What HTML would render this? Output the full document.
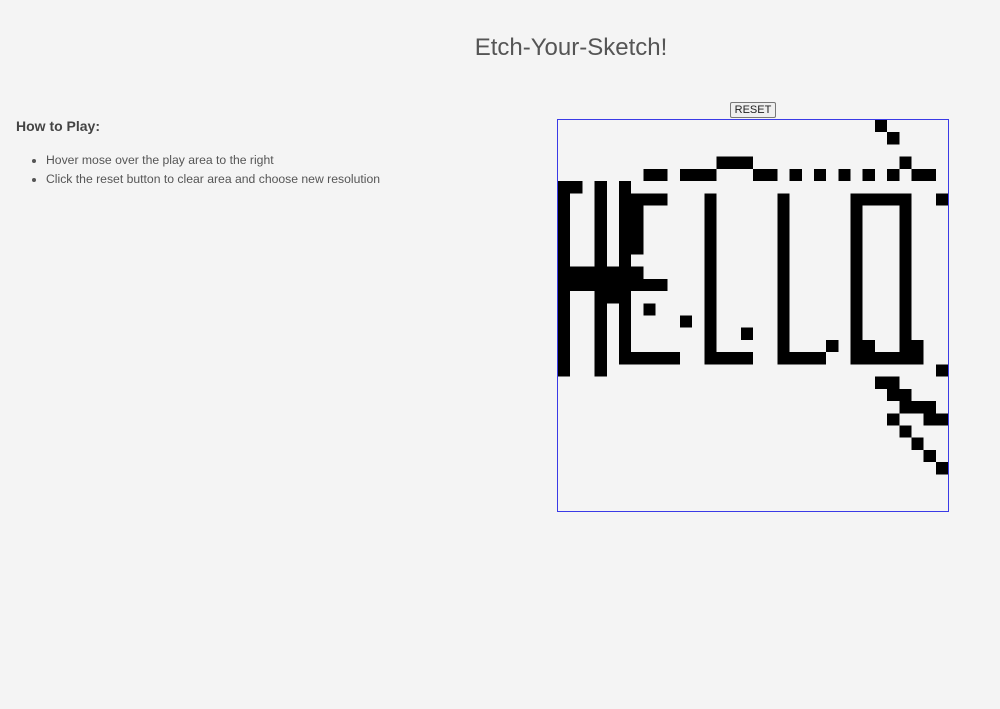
<!DOCTYPE html>
<html><head><meta charset="utf-8"><style>
html,body{margin:0;padding:0;background:#f4f4f4;width:1000px;height:709px;overflow:hidden;font-family:"Liberation Sans",Arial,sans-serif;color:#555}
h1{position:absolute;left:0;width:1142px;text-align:center;top:34px;margin:0;font-weight:normal;font-size:24px;color:#555}
.how{position:absolute;left:16px;top:118px;font-weight:bold;font-size:14px;color:#444}
ul{position:absolute;left:0;top:151px;margin:0;padding-left:46px;font-size:12.2px;line-height:19px;color:#555}
.btn{position:absolute;left:730px;top:102px;width:46px;height:16px;box-sizing:border-box;border:1px solid #777;border-radius:2px;background:#efefef;font-size:11px;text-align:center;line-height:14px;color:#222}
.grid{position:absolute;left:557px;top:119px;width:390px;height:391px;border:1px solid #3a3ae6}
svg{display:block}
</style></head><body>
<h1>Etch-Your-Sketch!</h1>
<div class="how">How to Play:</div>
<ul><li>Hover mose over the play area to the right</li><li>Click the reset button to clear area and choose new resolution</li></ul>
<div class="btn">RESET</div>
<div class="grid"><svg width="390" height="391" viewBox="0 0 32 32" preserveAspectRatio="none" shape-rendering="crispEdges" fill="#000">
<rect x="26" y="0" width="1" height="1"/><rect x="27" y="1" width="1" height="1"/><rect x="28" y="3" width="1" height="1"/>
<rect x="7" y="4" width="2" height="1"/><rect x="10" y="4" width="3" height="1"/><rect x="13" y="3" width="3" height="1"/><rect x="16" y="4" width="2" height="1"/><rect x="19" y="4" width="1" height="1"/><rect x="21" y="4" width="1" height="1"/><rect x="23" y="4" width="1" height="1"/><rect x="25" y="4" width="1" height="1"/><rect x="27" y="4" width="1" height="1"/><rect x="29" y="4" width="2" height="1"/>
<rect x="0" y="5" width="1" height="16"/><rect x="1" y="5" width="1" height="1"/><rect x="3" y="5" width="1" height="16"/><rect x="5" y="5" width="1" height="15"/><rect x="6" y="6" width="3" height="1"/><rect x="6" y="7" width="1" height="4"/><rect x="1" y="12" width="6" height="1"/><rect x="1" y="13" width="8" height="1"/><rect x="3" y="14" width="3" height="1"/>
<rect x="7" y="15" width="1" height="1"/><rect x="10" y="16" width="1" height="1"/><rect x="15" y="17" width="1" height="1"/><rect x="22" y="18" width="1" height="1"/>
<rect x="12" y="6" width="1" height="14"/><rect x="18" y="6" width="1" height="14"/><rect x="24" y="6" width="5" height="1"/><rect x="24" y="7" width="1" height="13"/><rect x="28" y="7" width="1" height="13"/><rect x="25" y="18" width="1" height="1"/><rect x="29" y="18" width="1" height="1"/>
<rect x="5" y="19" width="5" height="1"/><rect x="12" y="19" width="4" height="1"/><rect x="18" y="19" width="4" height="1"/><rect x="24" y="19" width="6" height="1"/>
<rect x="31" y="6" width="1" height="1"/><rect x="31" y="20" width="1" height="1"/>
<rect x="26" y="21" width="2" height="1"/><rect x="27" y="22" width="2" height="1"/><rect x="28" y="23" width="3" height="1"/><rect x="27" y="24" width="1" height="1"/><rect x="30" y="24" width="2" height="1"/><rect x="28" y="25" width="1" height="1"/><rect x="29" y="26" width="1" height="1"/><rect x="30" y="27" width="1" height="1"/><rect x="31" y="28" width="1" height="1"/>
</svg></div>
</body></html>
